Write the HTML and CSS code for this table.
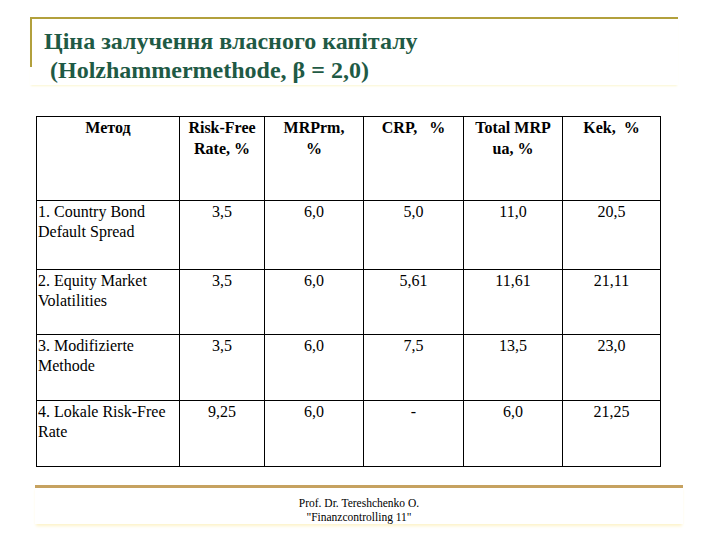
FILE: index.html
```html
<!DOCTYPE html>
<html>
<head>
<meta charset="utf-8">
<title>Ціна залучення власного капіталу</title>
<link rel="stylesheet" href="styles.css">
</head>
<body>
<div class="slide">
  <div class="head">
    <div class="bar"></div>
    <h1 class="title">Ціна залучення власного капіталу<br>&nbsp;(Holzhammermethode, β = 2,0)</h1>
  </div>
  <table class="grid">
    <colgroup>
      <col class="c1"><col class="c2"><col class="c3"><col class="c4"><col class="c5"><col class="c6">
    </colgroup>
    <thead>
      <tr class="r0">
        <th>Метод</th>
        <th>Risk-Free<br>Rate, %</th>
        <th>MRPrm,<br>%</th>
        <th>CRP, &nbsp;&nbsp;%</th>
        <th>Total MRP<br>ua, %</th>
        <th>Kek, &nbsp;%</th>
      </tr>
    </thead>
    <tbody>
      <tr class="r1">
        <td class="name">1. Country Bond<br>Default Spread</td>
        <td>3,5</td><td>6,0</td><td>5,0</td><td>11,0</td><td>20,5</td>
      </tr>
      <tr class="r2">
        <td class="name">2. Equity Market<br>Volatilities</td>
        <td>3,5</td><td>6,0</td><td>5,61</td><td>11,61</td><td>21,11</td>
      </tr>
      <tr class="r3">
        <td class="name">3. Modifizierte<br>Methode</td>
        <td>3,5</td><td>6,0</td><td>7,5</td><td>13,5</td><td>23,0</td>
      </tr>
      <tr class="r4">
        <td class="name">4. Lokale Risk-Free<br>Rate</td>
        <td>9,25</td><td>6,0</td><td>-</td><td>6,0</td><td>21,25</td>
      </tr>
    </tbody>
  </table>
  <div class="foot">
    <p class="credit">Prof. Dr. Tereshchenko O.<br>"Finanzcontrolling 11"</p>
  </div>
</div>
</body>
</html>
```

FILE: styles.css
```css
html, body {
  margin: 0;
  padding: 0;
  background: #ffffff;
}

.slide {
  width: 720px;
  height: 540px;
  box-sizing: border-box;
  padding-top: 17px;
  font-family: "Liberation Serif", serif;
  color: #000;
  overflow: hidden;
}

.head {
  display: flex;
  align-items: flex-start;
  margin-left: 30px;
  width: 648px;
  border-top: 2px solid #b2a03c;
  box-shadow: 0 2px 2px -1px #fbf6d0;
}

.bar {
  flex: none;
  width: 2px;
  height: 48px;
  background: #b2a03c;
}

.title {
  margin: 0 0 0 12px;
  padding-top: 8px;
  font-family: "Liberation Serif", serif;
  font-size: 24px;
  line-height: 29px;
  font-weight: bold;
  color: #1f5a45;
  white-space: nowrap;
}

.grid {
  margin: 31px 0 0 36px;
  width: 624px;
  border-collapse: collapse;
  table-layout: fixed;
  font-family: "Liberation Serif", serif;
  font-size: 16px;
  line-height: 20px;
}

.c1 { width: 143px; }
.c2 { width: 85px; }
.c3 { width: 99px; }
.c4 { width: 100px; }
.c5 { width: 99px; }
.c6 { width: 98px; }

.grid th,
.grid td {
  border: 1px solid #000;
  padding: 1px 1px 0 1px;
  vertical-align: top;
  text-align: center;
  white-space: nowrap;
}

.grid th {
  font-weight: bold;
  padding-top: 0;
  line-height: 21px;
}

.grid td.name {
  text-align: left;
}

.r0 { height: 84px; }
.r1 { height: 69px; }
.r2 { height: 65px; }
.r3 { height: 66px; }
.r4 { height: 66px; }

.foot {
  margin: 18px 0 0 35px;
  width: 648px;
  border-top: 3px solid #c6a260;
  box-shadow: 0 3px 3px -1px #fdf3c8;
}

.credit {
  margin: 0;
  padding-top: 8px;
  text-align: center;
  font-family: "Liberation Serif", serif;
  font-size: 11.5px;
  line-height: 14px;
}
```
